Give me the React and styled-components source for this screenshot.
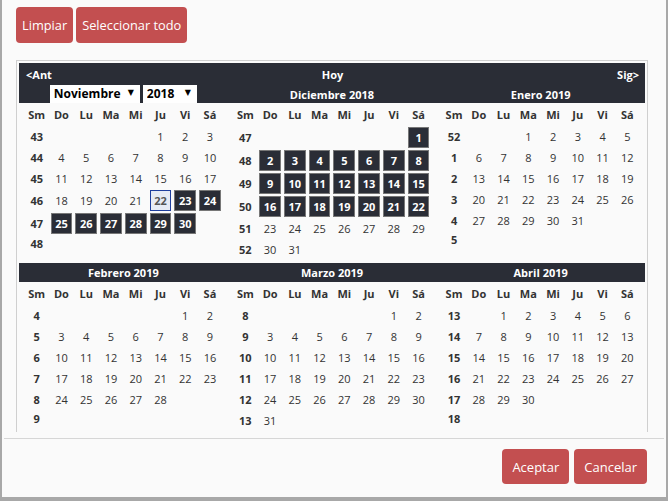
import styled, { createGlobalStyle, css } from "styled-components";

const GlobalStyle = createGlobalStyle`
  html, body {
    margin: 0;
    padding: 0;
    background: #fafafa;
  }
  body {
    font-family: "Open Sans", "DejaVu Sans", sans-serif;
  }
`;

const Dialog = styled.div`
  box-sizing: border-box;
  width: 668px;
  height: 501px;
  background: #fafafa;
  border: 2px solid #a8a8a8;
  border-top: none;
  border-bottom-width: 4px;
  padding: 0 2px;
  display: flex;
  flex-direction: column;
`;

const Content = styled.div`
  height: 432px;
  flex: none;
  overflow: hidden;
  padding: 7px 0 0 12px;
  box-sizing: border-box;
`;

const Toolbar = styled.div`
  display: flex;
  gap: 3px;
`;

const RedButton = styled.button`
  height: ${(p) => (p.$small ? "35px" : "36px")};
  padding: 0 ${(p) => (p.$small ? "10px" : "6px")};
  background: #c34f50;
  color: #fff;
  border: none;
  border-radius: 4px;
  font-family: "Open Sans", sans-serif;
  font-size: ${(p) => (p.$small ? "13px" : "12.8px")};
  cursor: pointer;
`;

const Picker = styled.div`
  box-sizing: border-box;
  width: 632px;
  margin-top: 17px;
  border: 1px solid #cfcfcf;
  border-bottom: none;
  padding: 2px 2px 0;
`;

const Band = styled.div`
  background: #2a2d36;
  color: #fff;
  font-weight: 700;
  font-size: 11px;
`;

const NavRow = styled.div`
  display: grid;
  grid-template-columns: 1fr auto 1fr;
  align-items: center;
  height: 22px;
  padding: 0 6px 0 7px;
`;

const NavLink = styled.span`
  justify-self: ${(p) => p.$align || "center"};
  cursor: pointer;
`;

const TitleRow = styled.div`
  display: grid;
  grid-template-columns: repeat(3, 1fr);
  align-items: center;
  height: ${(p) => p.$h}px;
  text-align: center;
`;

const SelectGroup = styled.div`
  display: flex;
  justify-content: center;
  gap: 3px;
  height: 18px;
`;

const SelectBox = styled.div`
  position: relative;
  width: ${(p) => p.$w}px;
  height: 18px;
  background: #fff;

  &::after {
    content: "▼";
    position: absolute;
    right: 6px;
    top: 3px;
    font-family: "DejaVu Sans", sans-serif;
    font-size: 8px;
    line-height: 10px;
    color: #000;
    pointer-events: none;
  }
`;

const Select = styled.select`
  appearance: none;
  width: 100%;
  height: 18px;
  border: none;
  border-radius: 0;
  background: transparent;
  padding: 0 0 0 4px;
  margin: 0;
  font-family: "Open Sans", sans-serif;
  font-size: 12px;
  font-weight: 700;
  color: #000;
  line-height: 18px;
  outline: none;
`;

const MonthGrid = styled.div`
  display: grid;
  grid-template-columns: repeat(3, 1fr);
  align-items: start;
`;

const Table = styled.table`
  width: 198px;
  margin: 0 auto 3px;
  border-collapse: collapse;
  table-layout: fixed;
  font-size: 11px;
  color: #333;
`;

const Th = styled.th`
  height: 23px;
  padding: 0;
  font-weight: 700;
  text-align: center;
`;

const Td = styled.td`
  padding: 1px 1.5px;
  text-align: center;
  font-weight: ${(p) => (p.$week ? 700 : 400)};
`;

const Day = styled.span`
  display: block;
  line-height: 17px;
  padding: 1px 0;
  ${(p) =>
    p.$state === "range" &&
    css`
      background: #2a2d36;
      border: 1px solid #777;
      color: #fff;
      font-weight: 700;
    `}
  ${(p) =>
    p.$state === "today" &&
    css`
      background: #e6ebf5;
      border: 1px solid #1f3f9e;
      color: #555;
      font-weight: 700;
    `}
`;

const ButtonPane = styled.div`
  margin-top: 6px;
  border-top: 1px solid #d6d6d6;
  padding: 10px 17px 0;
  display: flex;
  justify-content: flex-end;
  gap: 5px;
`;

const MONTHS = [
  "Enero", "Febrero", "Marzo", "Abril", "Mayo", "Junio",
  "Julio", "Agosto", "Septiembre", "Octubre", "Noviembre", "Diciembre",
];
const DAYS = ["Sm", "Do", "Lu", "Ma", "Mi", "Ju", "Vi", "Sá"];

const rangeStart = new Date(2018, 10, 23);
const rangeEnd = new Date(2018, 11, 22);
const today = new Date(2018, 10, 22);

const dayState = (d) => {
  if (d.getTime() === today.getTime()) return "today";
  if (d >= rangeStart && d <= rangeEnd) return "range";
  return null;
};

const Month = ({ year, month, firstWeek }) => {
  const offset = new Date(year, month, 1).getDay();
  const count = new Date(year, month + 1, 0).getDate();
  const rows = [];
  for (let r = 0; r < 6; r++) {
    const week = ((firstWeek - 1 + r) % 52) + 1;
    const cells = [];
    for (let c = 0; c < 7; c++) {
      const n = r * 7 + c - offset + 1;
      if (n < 1 || n > count) {
        cells.push(<Td key={c} />);
      } else {
        cells.push(
          <Td key={c}>
            <Day $state={dayState(new Date(year, month, n))}>{n}</Day>
          </Td>
        );
      }
    }
    rows.push(
      <tr key={r}>
        <Td $week>{week}</Td>
        {cells}
      </tr>
    );
  }
  return (
    <Table>
      <thead>
        <tr>
          {DAYS.map((d) => (
            <Th key={d}>{d}</Th>
          ))}
        </tr>
      </thead>
      <tbody>{rows}</tbody>
    </Table>
  );
};

const firstRow = [
  { year: 2018, month: 10, firstWeek: 43 },
  { year: 2018, month: 11, firstWeek: 47 },
  { year: 2019, month: 0, firstWeek: 52 },
];
const secondRow = [
  { year: 2019, month: 1, firstWeek: 4 },
  { year: 2019, month: 2, firstWeek: 8 },
  { year: 2019, month: 3, firstWeek: 13 },
];

const App = () => {
  return (
    <>
      <GlobalStyle />
      <Dialog>
        <Content>
          <Toolbar>
            <RedButton>Limpiar</RedButton>
            <RedButton>Seleccionar todo</RedButton>
          </Toolbar>
          <Picker>
            <Band>
              <NavRow>
                <NavLink $align="start">&lt;Ant</NavLink>
                <NavLink>Hoy</NavLink>
                <NavLink $align="end">Sig&gt;</NavLink>
              </NavRow>
              <TitleRow $h={18}>
                <SelectGroup>
                  <SelectBox $w={90}>
                    <Select defaultValue="10">
                      {MONTHS.map((m, i) => (
                        <option key={m} value={i}>
                          {m}
                        </option>
                      ))}
                    </Select>
                  </SelectBox>
                  <SelectBox $w={54}>
                    <Select defaultValue="2018">
                      <option value="2017">2017</option>
                      <option value="2018">2018</option>
                      <option value="2019">2019</option>
                    </Select>
                  </SelectBox>
                </SelectGroup>
                <span>Diciembre 2018</span>
                <span>Enero 2019</span>
              </TitleRow>
            </Band>
            <MonthGrid>
              {firstRow.map((m) => (
                <Month key={m.month} {...m} />
              ))}
            </MonthGrid>
            <Band>
              <TitleRow $h={19}>
                {secondRow.map((m) => (
                  <span key={m.month}>
                    {MONTHS[m.month]} {m.year}
                  </span>
                ))}
              </TitleRow>
            </Band>
            <MonthGrid>
              {secondRow.map((m) => (
                <Month key={m.month} {...m} />
              ))}
            </MonthGrid>
          </Picker>
        </Content>
        <ButtonPane>
          <RedButton $small>Aceptar</RedButton>
          <RedButton $small>Cancelar</RedButton>
        </ButtonPane>
      </Dialog>
    </>
  );
};

export default App;
